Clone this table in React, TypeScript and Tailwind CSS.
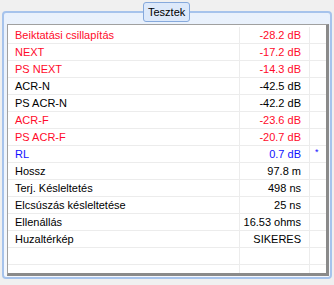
const rows: { label: string; value: string; color: string; mark?: string }[] = [
  { label: 'Beiktatási csillapítás', value: '-28.2 dB', color: 'text-[#ff0a2a]' },
  { label: 'NEXT', value: '-17.2 dB', color: 'text-[#ff0a2a]' },
  { label: 'PS NEXT', value: '-14.3 dB', color: 'text-[#ff0a2a]' },
  { label: 'ACR-N', value: '-42.5 dB', color: 'text-black' },
  { label: 'PS ACR-N', value: '-42.2 dB', color: 'text-black' },
  { label: 'ACR-F', value: '-23.6 dB', color: 'text-[#ff0a2a]' },
  { label: 'PS ACR-F', value: '-20.7 dB', color: 'text-[#ff0a2a]' },
  { label: 'RL', value: '0.7 dB', color: 'text-[#1010ff]', mark: '*' },
  { label: 'Hossz', value: '97.8 m', color: 'text-black' },
  { label: 'Terj. Késleltetés', value: '498 ns', color: 'text-black' },
  { label: 'Elcsúszás késleltetése', value: '25 ns', color: 'text-black' },
  { label: 'Ellenállás', value: '16.53 ohms', color: 'text-black' },
  { label: 'Huzaltérkép', value: 'SIKERES', color: 'text-black' },
  { label: '', value: '', color: 'text-black' },
  { label: '', value: '', color: 'text-black' },
];

export default function App() {
  return (
    <div
      className="w-[334px] h-[285px] bg-[#f0f0f0] pt-[11px] px-[2px] overflow-hidden"
      style={{ fontFamily: '"Liberation Sans", Arial, sans-serif' }}
    >
      <div className="relative h-[268px] rounded-[4px] border-2 border-[#a6c3ec] bg-gradient-to-b from-[#e9f1fc] to-[#f5f8fd] pt-[11px] pl-[3px] pr-[1px] pb-[1px]">
        <div className="absolute left-[139px] -top-[11px] h-[20px] px-[4px] rounded-[3px] border border-[#86a9dc] bg-[#dde9fa] text-[11px] leading-[18px] text-black">
          Tesztek
        </div>
        <div className="h-full bg-white border-l border-t border-[#a0a0a0] border-r-[3px] border-b-[3px] border-r-[#8a8a8a] border-b-[#8a8a8a] pt-[2px] overflow-hidden">
          {rows.map((r, i) => (
            <div key={i} className={`flex h-[17px] border-b border-[#ececec] text-[11px] leading-[17px] ${r.color}`}>
              <div className="w-[232px] shrink-0 border-r border-[#ececec] pl-[7px] whitespace-nowrap">{r.label}</div>
              <div className="w-[70px] shrink-0 border-r border-[#ececec] pr-[8px] text-right whitespace-nowrap">{r.value}</div>
              <div className="flex-1 pl-[5px] text-[9px] leading-[12px]">{r.mark}</div>
            </div>
          ))}
        </div>
      </div>
    </div>
  );
}
